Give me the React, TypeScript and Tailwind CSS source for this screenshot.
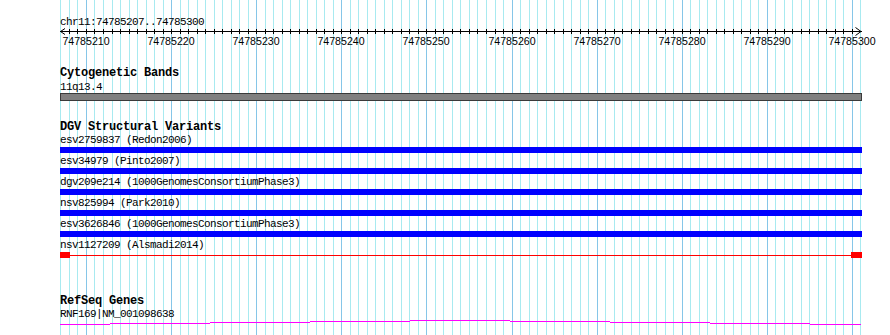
import React from 'react';

// base index 0 = 74785207, 94 bases across the view
const gx = (b: number) => Math.round(60.45 + 8.511 * b);
const BASES = Array.from({ length: 95 }, (_, b) => b);
const MAJOR = [3, 13, 23, 33, 43, 53, 63, 73, 83, 93];

const variants = [
  'esv2759837 (Redon2006)',
  'esv34979 (Pinto2007)',
  'dgv209e214 (1000GenomesConsortiumPhase3)',
  'nsv825994 (Park2010)',
  'esv3626846 (1000GenomesConsortiumPhase3)',
];

const geneSteps: [number, number, number][] = [
  [60, 110, 324],
  [110, 210, 323],
  [210, 310, 322],
  [310, 410, 321],
  [410, 510, 320],
  [510, 610, 321],
  [610, 710, 322],
  [710, 810, 323],
  [810, 861, 324],
];

function Grid() {
  return (
    <svg className="absolute inset-0" width={890} height={335} shapeRendering="crispEdges">
      {BASES.map((b) => {
        const major = (b - 3) % 10 === 0;
        return (
          <line
            key={b}
            x1={gx(b) + 0.5}
            x2={gx(b) + 0.5}
            y1={0}
            y2={335}
            stroke={major ? '#86c6e8' : '#a8eaf0'}
            strokeWidth={1}
          />
        );
      })}
    </svg>
  );
}

function Ruler() {
  return (
    <svg width={802} height={20} className="block overflow-visible">
      <g shapeRendering="crispEdges">
        <line x1={0} x2={802} y1={3.5} y2={3.5} stroke="#000" />
        {BASES.slice(1, 94).map((b) => (
          <line key={b} x1={gx(b) - 60 + 0.5} x2={gx(b) - 60 + 0.5} y1={1} y2={6} stroke="#000" />
        ))}
      </g>
      <polyline points="5,0.5 0.5,3.5 5,6.5" fill="none" stroke="#000" strokeWidth={1} />
      <polyline points="795.5,-0.5 801,3.5 795.5,7.5" fill="none" stroke="#000" strokeWidth={1} />
      {MAJOR.map((b) => (
        <text
          key={b}
          x={gx(b) - 60}
          y={16.6}
          textAnchor="middle"
          fontSize={10.6}
          fontFamily="'Liberation Sans', Arial, sans-serif"
          fill="#000"
        >
          {74785207 + b}
        </text>
      ))}
    </svg>
  );
}

const label = "h-[12px] text-[11px] leading-[12px] tracking-[-0.6px] text-black whitespace-pre";
const title = "h-[13px] text-[12px] leading-[13px] tracking-[-0.2px] font-bold text-black whitespace-pre";

export default function App() {
  return (
    <div className="relative w-[890px] h-[335px] overflow-hidden bg-white font-['Liberation_Mono',monospace]">
      <Grid />
      <div className="relative flex flex-col pl-[60px] pt-[16px] w-[862px]">
        <div className={label}>chr11:74785207..74785300</div>
        <Ruler />

        <div className={`${title} mt-[19px]`}>Cytogenetic Bands</div>
        <div className={`${label} mt-[1px]`}>11q13.4</div>
        <div className="h-[8px] bg-[#808080] border border-[#3a3a3a]" />

        <div className={`${title} mt-[20px]`}>DGV Structural Variants</div>
        {variants.map((v, i) => (
          <div key={v} className={`flex flex-col ${i > 0 ? 'mt-[2px]' : ''}`}>
            <div className={label}>{v}</div>
            <div className="mt-[1px] h-[6px] bg-[#0000ff]" />
          </div>
        ))}
        <div className="flex flex-col mt-[2px]">
          <div className={label}>nsv1127209 (Alsmadi2014)</div>
          <div className="mt-[1px] h-[6px] flex items-center">
            <div className="w-[10px] h-[6px] bg-[#ff0000]" />
            <div className="flex-1 h-px bg-[#ff0000]" />
            <div className="w-[11px] h-[6px] bg-[#ff0000]" />
          </div>
        </div>

        <div className={`${title} mt-[37px]`}>RefSeq Genes</div>
        <div className={label}>RNF169|NM_001098638</div>
        <svg width={802} height={5} className="block" shapeRendering="crispEdges">
          {geneSteps.map(([a, b, y], i) => (
            <line key={i} x1={a - 60} x2={b - 60} y1={y - 320 + 0.5} y2={y - 320 + 0.5} stroke="#ff00ff" />
          ))}
        </svg>
      </div>
    </div>
  );
}
